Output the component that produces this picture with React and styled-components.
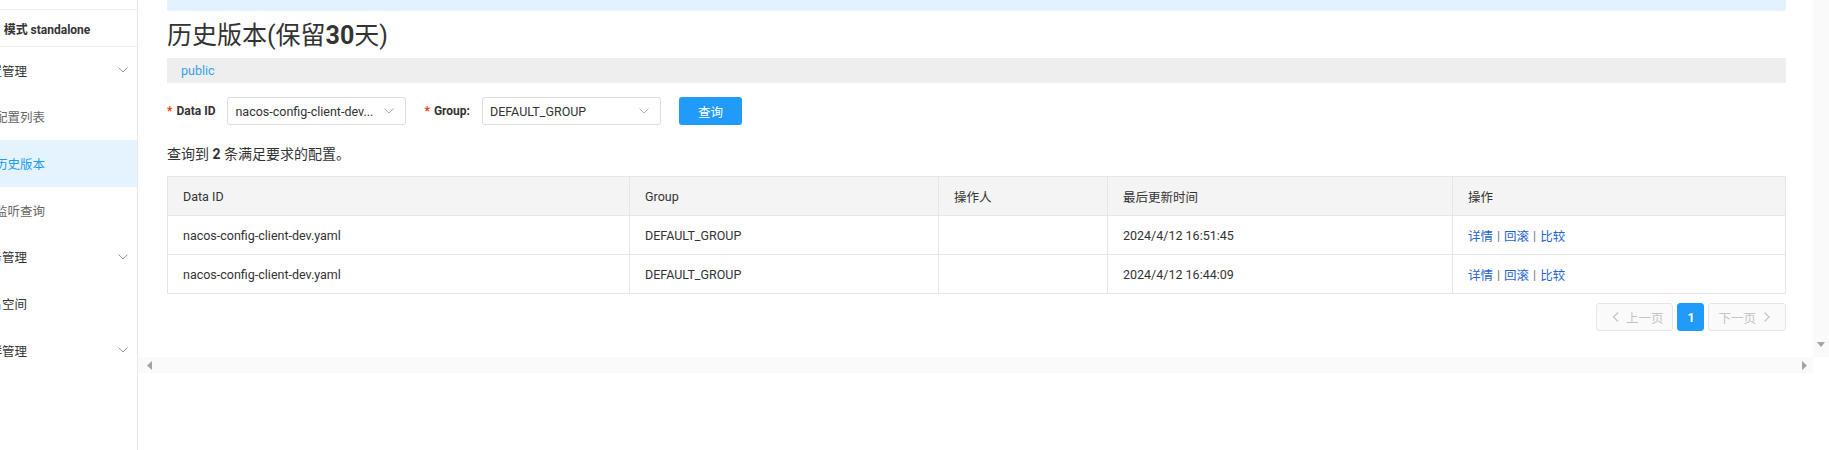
import React from 'react';
import styled, { createGlobalStyle } from 'styled-components';

const GlobalStyle = createGlobalStyle`
  html, body { margin: 0; padding: 0; background: #fff; overflow: hidden; }
  body {
    font-family: Roboto, "Noto Sans CJK SC", "Noto Sans", sans-serif;
    color: #333;
  }
  * { box-sizing: border-box; }
`;

const Page = styled.div`
  display: flex;
  width: 1829px;
  height: 450px;
  background: #fff;
`;

/* ---------- Sidebar ---------- */
const Sidebar = styled.aside`
  width: 138px;
  flex: none;
  border-right: 1px solid #e8e8e8;
  overflow: hidden;
`;

const SidebarInner = styled.div`
  width: 180px;
  margin-left: -43px;
`;

const ModeHeader = styled.div`
  margin-top: 9px;
  height: 38px;
  border-top: 1px solid #eee;
  border-bottom: 1px solid #eee;
  display: flex;
  align-items: center;
  justify-content: center;
  font-size: 12px;
  font-weight: 700;
  color: #333;
`;

const MenuItem = styled.div`
  height: 46.67px;
  display: flex;
  align-items: center;
  justify-content: space-between;
  padding-left: ${(p) => (p.$sub ? '38px' : '20px')};
  padding-right: 9px;
  font-size: 12.5px;
  color: ${(p) => (p.$active ? '#209bfa' : p.$sub ? '#666' : '#333')};
  background: ${(p) => (p.$active ? '#e5f3ff' : 'transparent')};
  white-space: nowrap;
`;

const Caret = ({ color = '#999', w = 10, h = 6 }) => (
  <svg width={w} height={h} viewBox="0 0 10 6" fill="none">
    <polyline points="0.5,0.5 5,5 9.5,0.5" stroke={color} strokeWidth="1" />
  </svg>
);

/* ---------- Main ---------- */
const Main = styled.div`
  flex: 1;
  min-width: 0;
  display: flex;
  flex-direction: column;
`;

const Upper = styled.div`
  display: flex;
  height: 357px;
`;

const Content = styled.main`
  flex: 1;
  min-width: 0;
  padding: 0 27px 0 29px;
  overflow: hidden;
`;

const VScroll = styled.div`
  width: 16px;
  flex: none;
  background: #fafafa;
  display: flex;
  flex-direction: column;
  justify-content: flex-end;
  align-items: center;
  padding-bottom: 10px;
`;

const HScrollRow = styled.div`
  display: flex;
  height: 16px;
`;

const HScroll = styled.div`
  flex: 1;
  background: #fafafa;
  display: flex;
  align-items: center;
  justify-content: space-between;
  padding: 0 6px 0 9px;
`;

const Corner = styled.div`
  width: 16px;
  flex: none;
`;

const Arrow = ({ dir }) => {
  const pts = {
    down: '0,0 8,0 4,5',
    left: '5,0 5,9 0,4.5',
    right: '0,0 0,9 5,4.5',
  }[dir];
  const size = dir === 'down' ? [8, 5] : [5, 9];
  return (
    <svg width={size[0]} height={size[1]} viewBox={`0 0 ${size[0]} ${size[1]}`}>
      <polygon points={pts} fill="#a3a3a3" />
    </svg>
  );
};

const Alert = styled.div`
  height: 11px;
  background: #e4f2fe;
  border-radius: 0 0 3px 3px;
`;

const Title = styled.h1`
  margin: 7px 0 0;
  font-size: 25px;
  line-height: 36px;
  font-weight: 400;
  color: #333;
  white-space: nowrap;
`;

const Strong = styled.span`
  font-weight: 700;
`;

const NamespaceBar = styled.div`
  margin-top: 4px;
  height: 25px;
  background: #eee;
  padding-left: 14px;
  display: flex;
  align-items: center;
  font-size: 12.5px;
  color: #33a1f3;
`;

const Form = styled.div`
  margin-top: 14px;
  display: flex;
  align-items: center;
  height: 28px;
`;

const FormItem = styled.div`
  display: flex;
  align-items: center;
  margin-right: 18px;
`;

const Label = styled.label`
  font-size: 12px;
  font-weight: 700;
  color: #333;
  padding-right: 12px;
  white-space: nowrap;
`;

const Star = styled.span`
  color: #ff3000;
  margin-right: 4px;
`;

const Select = styled.div`
  width: 179px;
  height: 28px;
  border: 1px solid #dcdee3;
  border-radius: 3px;
  padding: 0 11px 0 7px;
  display: flex;
  align-items: center;
  justify-content: space-between;
  font-size: 12.5px;
  color: #333;
  white-space: nowrap;
`;

const Button = styled.button`
  width: 63px;
  height: 28px;
  background: #209bfa;
  color: #fff;
  border: none;
  border-radius: 3px;
  font-family: inherit;
  font-size: 12.5px;
  padding: 0;
`;

const Result = styled.div`
  margin-top: 19px;
  line-height: 20px;
  font-size: 14px;
  color: #333;
`;

const Table = styled.div`
  margin-top: 12px;
  border: 1px solid #e6e6e6;
  border-bottom: none;
`;

const Row = styled.div`
  display: grid;
  grid-template-columns: 462px 309px 169px 345px 1fr;
  border-bottom: 1px solid #e6e6e6;
  background: ${(p) => (p.$head ? '#f4f4f4' : '#fff')};
`;

const Cell = styled.div`
  height: 38px;
  padding-left: 15px;
  display: flex;
  align-items: center;
  font-size: 12.5px;
  color: #333;
  border-right: 1px solid #e6e6e6;
  white-space: nowrap;
  &:last-child { border-right: none; }
`;

const Link = styled.a`
  color: #1e66d2;
  text-decoration: none;
  cursor: pointer;
`;

const Sep = styled.span`
  color: #777;
  margin: 0 4px;
`;

const Pagination = styled.div`
  margin-top: 9px;
  display: flex;
  justify-content: flex-end;
  gap: 4px;
`;

const PageButton = styled.button`
  height: 28px;
  padding: 0 9px;
  display: flex;
  align-items: center;
  justify-content: center;
  gap: 6px;
  border-radius: 3px;
  font-family: inherit;
  font-size: 12.5px;
  border: 1px solid ${(p) => (p.$current ? '#209bfa' : '#e6e6e6')};
  background: ${(p) => (p.$current ? '#209bfa' : '#fafafa')};
  color: ${(p) => (p.$current ? '#fff' : '#c4c4c4')};
  font-weight: ${(p) => (p.$current ? 700 : 400)};
  ${(p) => p.$current && 'padding: 0; width: 27px;'}
`;

const PageChevron = ({ dir }) => (
  <svg width="14" height="10" viewBox="0 0 14 10" fill="none">
    {dir === 'left' ? (
      <polyline points="12,0.5 7.5,5 12,9.5" stroke="#c4c4c4" strokeWidth="1.2" />
    ) : (
      <polyline points="2.5,0.5 7,5 2.5,9.5" stroke="#c4c4c4" strokeWidth="1.2" />
    )}
  </svg>
);

const menu = [
  { label: '配置管理', caret: true },
  { label: '配置列表', sub: true },
  { label: '历史版本', sub: true, active: true },
  { label: '监听查询', sub: true },
  { label: '服务管理', caret: true },
  { label: '命名空间' },
  { label: '集群管理', caret: true },
];

const rows = [
  { id: 'nacos-config-client-dev.yaml', group: 'DEFAULT_GROUP', op: '', time: '2024/4/12 16:51:45' },
  { id: 'nacos-config-client-dev.yaml', group: 'DEFAULT_GROUP', op: '', time: '2024/4/12 16:44:09' },
];

export default function App() {
  return (
    <>
      <GlobalStyle />
      <Page>
        <Sidebar>
          <SidebarInner>
            <ModeHeader>模式 standalone</ModeHeader>
            {menu.map((m) => (
              <MenuItem key={m.label} $sub={m.sub} $active={m.active}>
                <span>{m.label}</span>
                {m.caret && <Caret />}
              </MenuItem>
            ))}
          </SidebarInner>
        </Sidebar>
        <Main>
          <Upper>
            <Content>
              <Alert />
              <Title>
                历史版本(保留<Strong>30</Strong>天)
              </Title>
              <NamespaceBar>public</NamespaceBar>
              <Form>
                <FormItem>
                  <Label>
                    <Star>*</Star>Data ID
                  </Label>
                  <Select>
                    <span>nacos-config-client-dev...</span>
                    <Caret color="#b0b0b0" />
                  </Select>
                </FormItem>
                <FormItem>
                  <Label>
                    <Star>*</Star>Group:
                  </Label>
                  <Select>
                    <span>DEFAULT_GROUP</span>
                    <Caret color="#b0b0b0" />
                  </Select>
                </FormItem>
                <Button>查询</Button>
              </Form>
              <Result>
                查询到 <Strong>2</Strong> 条满足要求的配置。
              </Result>
              <Table>
                <Row $head>
                  <Cell>Data ID</Cell>
                  <Cell>Group</Cell>
                  <Cell>操作人</Cell>
                  <Cell>最后更新时间</Cell>
                  <Cell>操作</Cell>
                </Row>
                {rows.map((r) => (
                  <Row key={r.time}>
                    <Cell>{r.id}</Cell>
                    <Cell>{r.group}</Cell>
                    <Cell>{r.op}</Cell>
                    <Cell>{r.time}</Cell>
                    <Cell>
                      <Link>详情</Link>
                      <Sep>|</Sep>
                      <Link>回滚</Link>
                      <Sep>|</Sep>
                      <Link>比较</Link>
                    </Cell>
                  </Row>
                ))}
              </Table>
              <Pagination>
                <PageButton disabled>
                  <PageChevron dir="left" />
                  上一页
                </PageButton>
                <PageButton $current>1</PageButton>
                <PageButton disabled>
                  下一页
                  <PageChevron dir="right" />
                </PageButton>
              </Pagination>
            </Content>
            <VScroll>
              <Arrow dir="down" />
            </VScroll>
          </Upper>
          <HScrollRow>
            <HScroll>
              <Arrow dir="left" />
              <Arrow dir="right" />
            </HScroll>
            <Corner />
          </HScrollRow>
        </Main>
      </Page>
    </>
  );
}
